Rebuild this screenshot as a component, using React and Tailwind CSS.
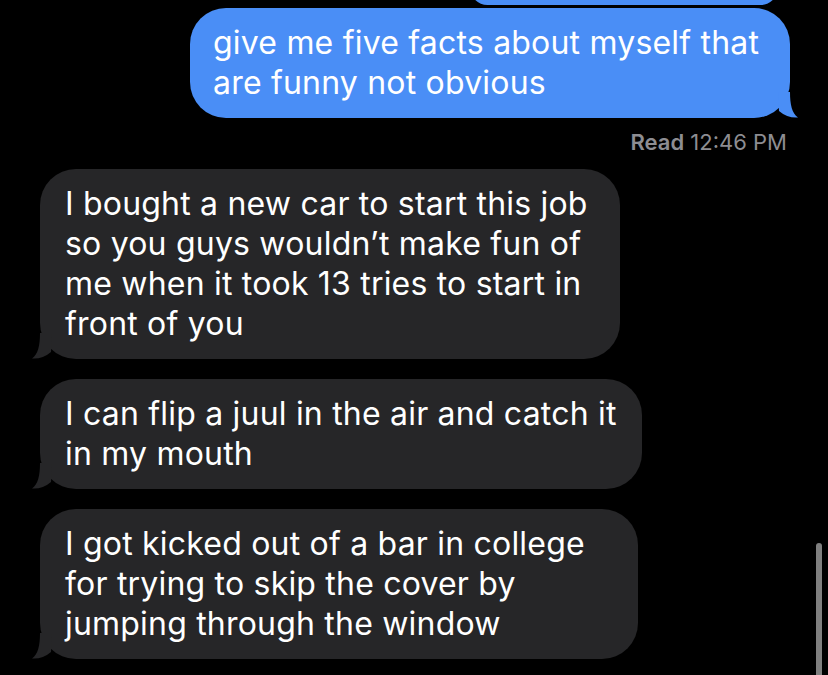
import React from "react";

const font = { fontFamily: "Inter, 'Noto Sans', sans-serif" };

function TailRight({ color }) {
  return (
    <svg className="absolute right-[-12px] bottom-0" width="24" height="26" viewBox="0 0 24 26">
      <path d="M0,0 L12,0 C12,13 14,21 20,25.5 C13,26 7,24 1,19 Z" fill={color} />
    </svg>
  );
}

function TailLeft({ color }) {
  return (
    <svg className="absolute left-[-12px] bottom-0" width="24" height="26" viewBox="0 0 24 26">
      <path d="M24,0 L12,0 C12,13 10,21 4,25.5 C11,26 17,24 23,19 Z" fill={color} />
    </svg>
  );
}

function Grey({ lines, width }) {
  return (
    <div className={`relative ${width} bg-[#262628] rounded-[36px] pl-[25px] py-[15px]`}>
      {lines.map((l, i) => (
        <div key={i} className="text-white text-[32px] leading-[40px] tracking-[0.2px] whitespace-nowrap">{l}</div>
      ))}
      <TailLeft color="#262628" />
    </div>
  );
}

export default function App() {
  return (
    <div className="relative w-[828px] h-[675px] bg-black overflow-hidden" style={font}>
      <div className="flex flex-col">
        <div className="self-end mr-[50px] -mt-[30px] h-[35px] w-[308px] rounded-[36px] bg-[#4a8ef6]" />
        <div className="relative self-end mr-[38px] mt-[3px] w-[600px] bg-[#4a8ef6] rounded-[36px] pl-[23px] py-[15px]">
          <div className="text-white text-[32px] leading-[40px] tracking-[0.2px] whitespace-nowrap">give me five facts about myself that</div>
          <div className="text-white text-[32px] leading-[40px] tracking-[0.2px] whitespace-nowrap">are funny not obvious</div>
          <TailRight color="#4a8ef6" />
        </div>
        <div className="self-end mr-[41px] mt-[11px] text-[22px] leading-[26px] text-[#8d8d92]">
          <span className="font-semibold">Read</span> 12:46 PM
        </div>
        <div className="flex flex-col items-start gap-[20px] ml-[40px] mt-[14px]">
          <Grey
            width="w-[580px]"
            lines={[
              "I bought a new car to start this job",
              "so you guys wouldn’t make fun of",
              "me when it took 13 tries to start in",
              "front of you",
            ]}
          />
          <Grey
            width="w-[602px]"
            lines={["I can flip a juul in the air and catch it", "in my mouth"]}
          />
          <Grey
            width="w-[598px]"
            lines={[
              "I got kicked out of a bar in college",
              "for trying to skip the cover by",
              "jumping through the window",
            ]}
          />
        </div>
      </div>
      <div className="absolute right-[6px] top-[543px] w-[6px] h-[140px] rounded-full bg-[#7f7f7f]" />
    </div>
  );
}
